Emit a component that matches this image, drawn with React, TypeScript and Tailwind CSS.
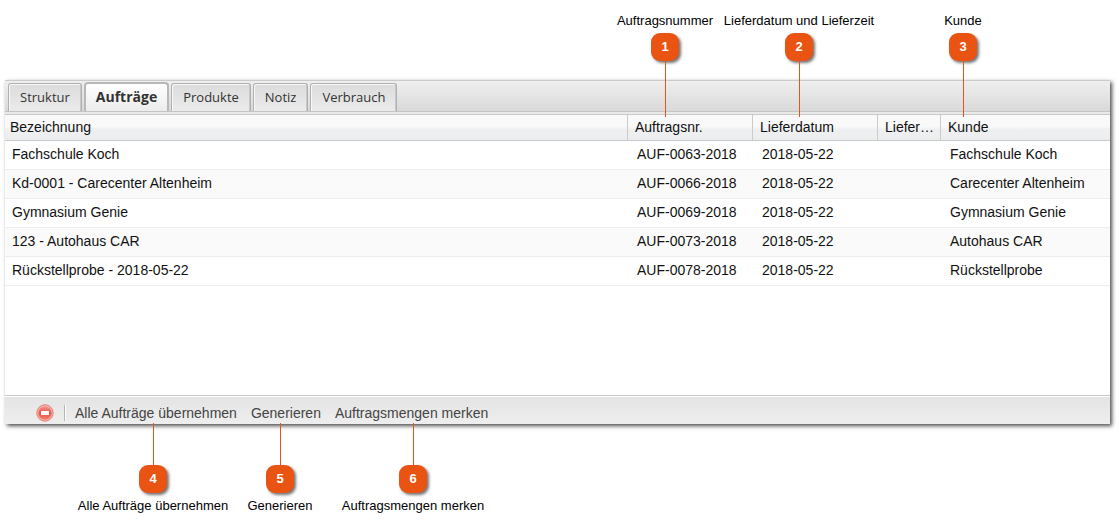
type Auftrag = {
    bezeichnung: string;
    nummer: string;
    datum: string;
    lieferzeit: string;
    kunde: string;
};

const tabs = ["Struktur", "Aufträge", "Produkte", "Notiz", "Verbrauch"];

const auftraege: Auftrag[] = [
    { bezeichnung: "Fachschule Koch", nummer: "AUF-0063-2018", datum: "2018-05-22", lieferzeit: "", kunde: "Fachschule Koch" },
    { bezeichnung: "Kd-0001 - Carecenter Altenheim", nummer: "AUF-0066-2018", datum: "2018-05-22", lieferzeit: "", kunde: "Carecenter Altenheim" },
    { bezeichnung: "Gymnasium Genie", nummer: "AUF-0069-2018", datum: "2018-05-22", lieferzeit: "", kunde: "Gymnasium Genie" },
    { bezeichnung: "123 - Autohaus CAR", nummer: "AUF-0073-2018", datum: "2018-05-22", lieferzeit: "", kunde: "Autohaus CAR" },
    { bezeichnung: "Rückstellprobe - 2018-05-22", nummer: "AUF-0078-2018", datum: "2018-05-22", lieferzeit: "", kunde: "Rückstellprobe" },
];

// the upper callouts follow the right-aligned columns, the lower ones the left-aligned buttons
const obere = [
    { nr: 1, text: "Auftragsnummer", pos: "right-[454px]" },
    { nr: 2, text: "Lieferdatum und Lieferzeit", pos: "right-[320px]" },
    { nr: 3, text: "Kunde", pos: "right-[156px]" },
];

const untere = [
    { nr: 4, text: "Alle Aufträge übernehmen", pos: "left-[153px]" },
    { nr: 5, text: "Generieren", pos: "left-[280px]" },
    { nr: 6, text: "Auftragsmengen merken", pos: "left-[413px]" },
];

function Nummer({ nr }: { nr: number }) {
    return (
        <span className="flex size-7 items-center justify-center rounded-[9px] bg-[#e95412] text-[13px] font-bold text-white shadow-[2px_2px_3px_rgba(0,0,0,0.55)]">
            {nr}
        </span>
    );
}

function Tab({ name, aktiv }: { name: string; aktiv: boolean }) {
    return (
        <button
            type="button"
            role="tab"
            aria-selected={aktiv}
            className={
                aktiv
                    ? "h-[29px] rounded-t-[4px] border-2 border-b-0 border-[#b8b8b8] bg-linear-to-b from-white to-[#ececec] px-[10px] pb-px text-sm font-bold text-[#333]"
                    : "h-7 rounded-t-[3px] border border-b-0 border-[#b0b0b0] bg-linear-to-b from-[#dcdcdc] to-[#ebebeb] px-[11px] pb-px text-[13px] text-[#333] shadow-[inset_1px_1px_0_#f8f8f8,inset_-1px_0_0_#c8c8c8]"
            }
        >
            {name}
        </button>
    );
}

function Entfernen() {
    return (
        <svg viewBox="0 0 18 18" className="size-[18px]" aria-hidden="true">
            <defs>
                <linearGradient id="rot" x1="0" y1="0" x2="0" y2="1">
                    <stop offset="0" stopColor="#f0958a" />
                    <stop offset="0.5" stopColor="#e9564c" />
                    <stop offset="1" stopColor="#f27b69" />
                </linearGradient>
            </defs>
            <circle cx="9" cy="9" r="8.2" fill="#f6b3a8" stroke="#e08279" strokeWidth="1" />
            <circle cx="9" cy="9" r="6.6" fill="url(#rot)" />
            <rect x="5" y="7" width="8" height="4" rx="0.6" fill="#fff" />
        </svg>
    );
}

export default function App() {
    return (
        <main className="relative bg-white pt-20 pr-[9px] pb-[106px] pl-[5px] font-['Liberation_Sans',Arial,sans-serif] text-sm text-[#111]">
            <section className="border-t border-[#cbcbcb] shadow-[2px_2px_4px_rgba(0,0,0,0.7)]">
                <div className="border-b border-[#c8c8c8] bg-[#e9e9e9] pb-[2px]">
                    <div
                        role="tablist"
                        className="flex h-[31px] items-end gap-[2px] border-b border-[#c4c4c4] bg-linear-to-b from-[#efefef] to-[#d9d9d9] pl-[3px] font-['Open_Sans',sans-serif]"
                    >
                        {tabs.map((name) => (
                            <Tab key={name} name={name} aktiv={name === "Aufträge"} />
                        ))}
                    </div>
                </div>

                <div className="min-h-[280px] bg-white">
                    <table className="w-full table-fixed border-separate border-spacing-0 text-left">
                        <colgroup>
                            <col />
                            <col className="w-[125px]" />
                            <col className="w-[125px]" />
                            <col className="w-[63px]" />
                            <col className="w-[170px]" />
                        </colgroup>
                        <thead>
                            <tr className="h-[26px] bg-[linear-gradient(#f9f9f9_45%,#eff0f2_55%,#eaecee)] *:border-b *:border-[#cbcbcb] *:pb-[2px] *:font-normal *:whitespace-nowrap">
                                <th className="pl-[5px]">Bezeichnung</th>
                                <th className="border-l pl-[7px]">Auftragsnr.</th>
                                <th className="border-l pl-[7px]">Lieferdatum</th>
                                <th className="border-l pl-[7px]">Liefer…</th>
                                <th className="border-l pl-[7px]">Kunde</th>
                            </tr>
                        </thead>
                        <tbody>
                            {auftraege.map((a) => (
                                <tr key={a.nummer} className="h-[29px] even:bg-[#fafafa] *:truncate *:border-b *:border-[#ededed] *:pb-[2px]">
                                    <td className="pl-[7px]">{a.bezeichnung}</td>
                                    <td className="pl-[10px]">{a.nummer}</td>
                                    <td className="pl-[10px]">{a.datum}</td>
                                    <td className="pl-[10px]">{a.lieferzeit}</td>
                                    <td className="pl-[10px]">{a.kunde}</td>
                                </tr>
                            ))}
                        </tbody>
                    </table>
                </div>

                <footer className="border-t border-[#c8c8c8]">
                    <div className="flex h-7 items-center border-t border-white bg-linear-to-b from-[#e4e4e4] to-[#eeeeee] pt-1 pl-[31px] text-[#444]">
                        <button type="button" aria-label="Entfernen">
                            <Entfernen />
                        </button>
                        <span className="mr-[9px] ml-[10px] h-4 border-r border-l border-r-white border-l-[#b5b5ad]" />
                        <div className="flex gap-[14px]">
                            <button type="button">Alle Aufträge übernehmen</button>
                            <button type="button">Generieren</button>
                            <button type="button">Auftragsmengen merken</button>
                        </div>
                    </div>
                </footer>
            </section>

            {obere.map((h) => (
                <div key={h.nr} className={`absolute top-3 flex w-0 flex-col items-center ${h.pos}`}>
                    <span className="mb-1 text-[13px] leading-[17px] whitespace-nowrap text-black">{h.text}</span>
                    <Nummer nr={h.nr} />
                    <span className="h-14 w-px bg-[#e95412]" />
                </div>
            ))}

            {untere.map((h) => (
                <div key={h.nr} className={`absolute bottom-4 flex w-0 flex-col items-center ${h.pos}`}>
                    <span className="h-[42px] w-px bg-[#e95412]" />
                    <Nummer nr={h.nr} />
                    <span className="mt-1 text-[13px] leading-[17px] whitespace-nowrap text-black">{h.text}</span>
                </div>
            ))}
        </main>
    );
}
